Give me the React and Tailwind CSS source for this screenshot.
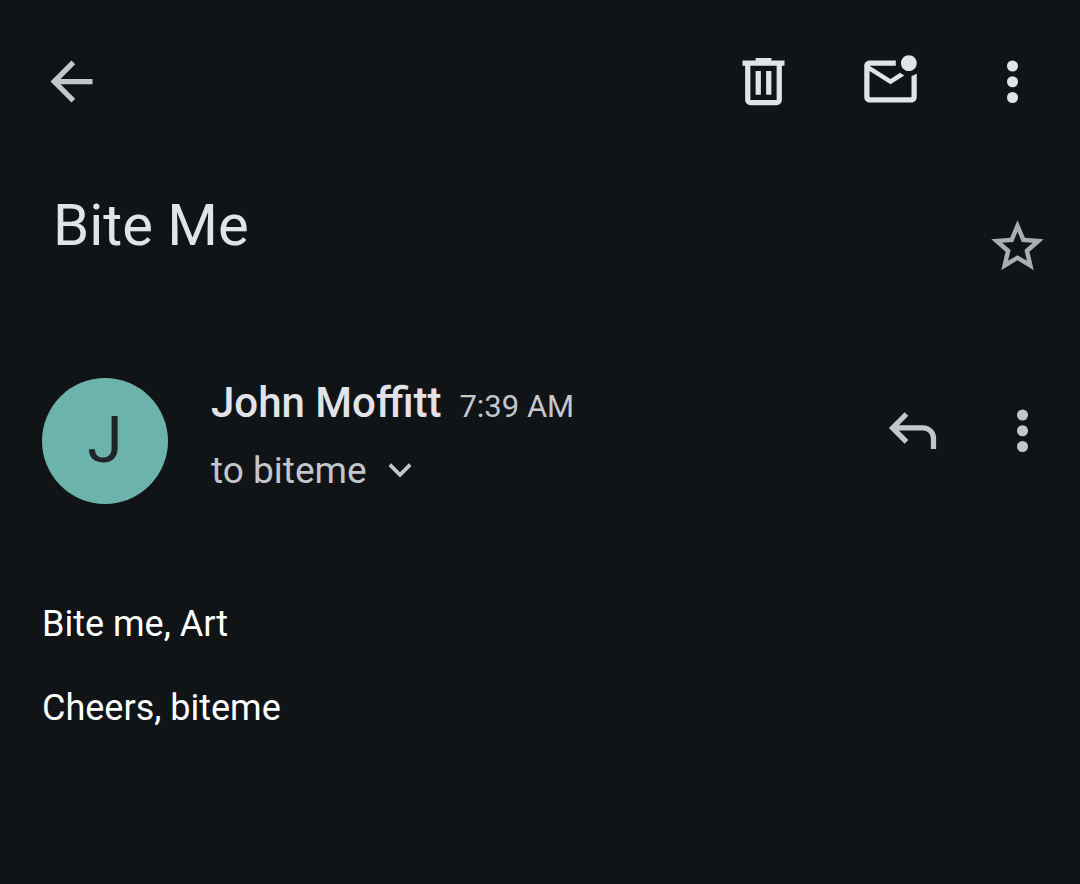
import React, { useState } from "react";

const ICONS = {
  back: "M7.825 13l5.6 5.6L12 20l-8-8 8-8 1.425 1.4-5.6 5.6H20v2z",
  trash:
    "M7 21q-.825 0-1.412-.587T5 19V6H4V4h5V3h6v1h5v2h-1v13q0 .825-.587 1.413T17 21zM17 6H7v13h10zM9 17h2V8H9zm4 0h2V8h-2z",
  unread:
    "M22 8.98V18c0 1.1-.9 2-2 2H4c-1.1 0-2-.9-2-2V6c0-1.1.9-2 2-2h10.1c-.06.32-.1.66-.1 1s.04.68.1 1H4l8 5 3.67-2.29c.47.43 1.02.76 1.63.98L12 13 4 8v10h16V9.9c.74-.15 1.42-.48 2-.92zM16 5c0 1.66 1.34 3 3 3s3-1.34 3-3-1.34-3-3-3-3 1.34-3 3z",
  more: "M12 8.2a2.1 2.1 0 1 0 0-4.2 2.1 2.1 0 0 0 0 4.2zm0 6a2.1 2.1 0 1 0 0-4.2 2.1 2.1 0 0 0 0 4.2zm0 6a2.1 2.1 0 1 0 0-4.2 2.1 2.1 0 0 0 0 4.2z",
  star: "M22 9.24l-7.19-.62L12 2 9.19 8.63 2 9.24l5.46 4.73L5.82 21 12 17.27 18.18 21l-1.63-7.03L22 9.24zM12 15.3l-3.6 2.17.96-4.1-3.18-2.76 4.19-.36L12 6.4l1.63 3.85 4.19.36-3.18 2.76.96 4.1L12 15.3z",
  reply:
    "M19 19v-4q0-1.25-.875-2.125T16 12H6.825l3.6 3.6L9 17l-6-6 6-6 1.425 1.4-3.6 3.6H16q2.075 0 3.538 1.463T21 15v4z",
  expand: "M12 15.4l-6-6L7.4 8l4.6 4.6L16.6 8 18 9.4z",
};

const Icon = ({ name, className = "size-[63px]" }) => (
  <svg viewBox="0 0 24 24" fill="currentColor" aria-hidden="true" className={className}>
    <path d={ICONS[name]} />
  </svg>
);

const IconButton = ({ icon, label, className = "", ...props }) => (
  <button type="button" aria-label={label} className={`shrink-0 cursor-pointer ${className}`} {...props}>
    <Icon name={icon} />
  </button>
);

const message = {
  subject: "Bite Me",
  sender: "John Moffitt",
  time: "7:39 AM",
  recipient: "biteme",
  body: ["Bite me, Art", "Cheers, biteme"],
};

export default function App() {
  const [starred, setStarred] = useState(false);

  return (
    <div className="min-h-screen bg-[#101417] font-[Roboto,sans-serif] text-[#e1e3e8]">
      {/* Toolbar */}
      <header className="flex items-center justify-between pt-[50px] pr-9 pl-10">
        <IconButton icon="back" label="Back" className="text-[#c4c6cc]" />
        <div className="flex items-center gap-16">
          <IconButton icon="trash" label="Delete" />
          <div className="flex items-center gap-[59px]">
            <IconButton icon="unread" label="Mark as unread" />
            <IconButton icon="more" label="More options" />
          </div>
        </div>
      </header>

      <main>
        {/* Subject */}
        <div className="flex items-end justify-between pt-[76px] pr-[31px] pl-[53px]">
          <h1 className="mb-[17px] text-[58px] leading-[72px]">{message.subject}</h1>
          <IconButton
            icon="star"
            label="Star"
            aria-pressed={starred}
            onClick={() => setStarred(!starred)}
            className={starred ? "text-yellow-400" : "text-[#abadb1]"}
          />
        </div>

        {/* Sender */}
        <section className="flex items-start pt-[100px] pr-[26px] pl-[42px]">
          <div className="flex size-[126px] shrink-0 items-center justify-center rounded-full bg-[#6cb3ab] text-[64px] text-[#1f2429]">
            {message.sender[0]}
          </div>
          <div className="ml-[43px] grow pt-px">
            <div className="flex items-baseline gap-[18px]">
              <h2 className="text-[42px] leading-[48px] font-medium">{message.sender}</h2>
              <time className="text-[31px] leading-[48px] text-[#c4c6cc]">{message.time}</time>
            </div>
            <button
              type="button"
              className="mt-4 flex cursor-pointer items-center gap-[10px] text-[37px] leading-[48px] text-[#c4c6cc]"
            >
              to {message.recipient}
              <Icon name="expand" className="size-[46px]" />
            </button>
          </div>
          <div className="flex gap-[47px] pt-[21px] text-[#c4c6cc]">
            <IconButton icon="reply" label="Reply" />
            <IconButton icon="more" label="More message options" />
          </div>
        </section>

        {/* Body */}
        <article className="space-y-[42px] px-[42px] pt-[99px] pb-20 text-[36px] leading-[42px] text-white">
          {message.body.map((line) => (
            <p key={line}>{line}</p>
          ))}
        </article>
      </main>
    </div>
  );
}
